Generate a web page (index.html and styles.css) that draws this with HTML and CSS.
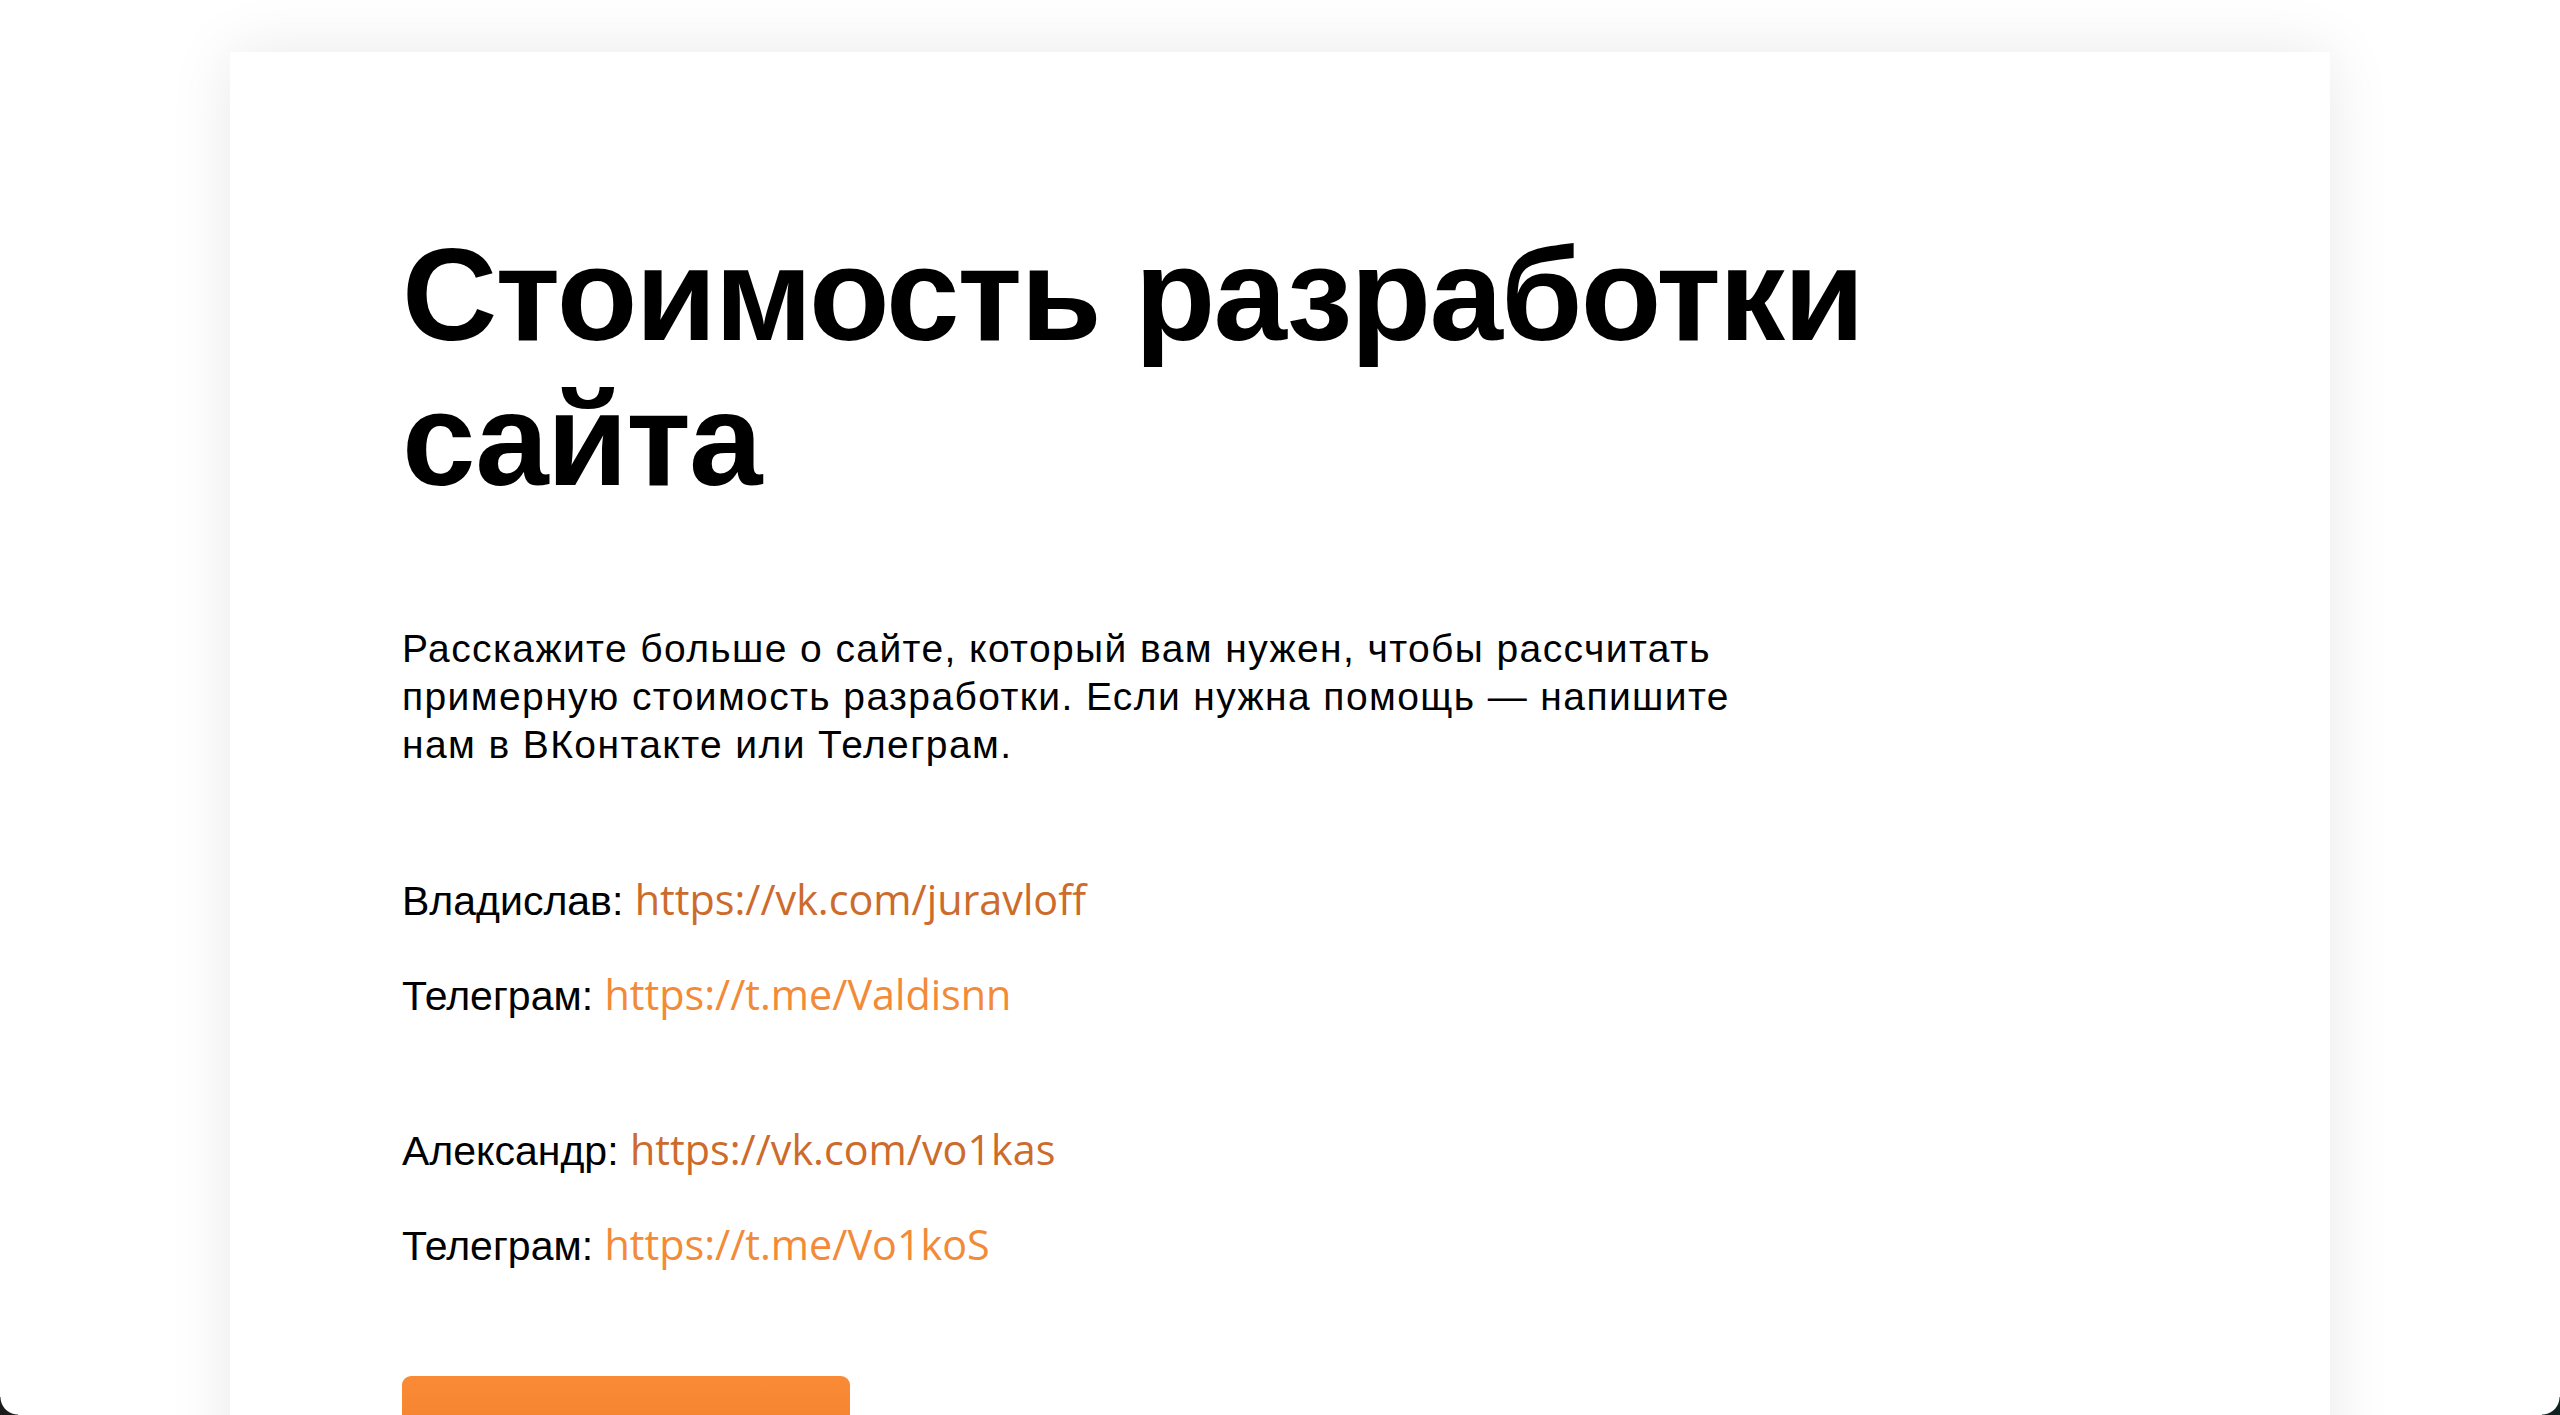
FILE: index.html
```html
<!DOCTYPE html>
<html lang="ru">
<head>
<meta charset="utf-8">
<title>Стоимость разработки сайта</title>
<link rel="stylesheet" href="styles.css">
</head>
<body>
<main class="card">
  <h1 class="title">Стоимость разработки<br>сайта</h1>
  <p class="lead">Расскажите больше о сайте, который вам нужен, чтобы рассчитать<br>примерную стоимость разработки. Если нужна помощь — напишите<br>нам в ВКонтакте или Телеграм.</p>
  <div class="contacts">
    <p class="row">Владислав: <a class="link link-vk" href="#">https://vk.com/juravloff</a></p>
    <p class="row">Телеграм: <a class="link link-tg" href="#">https://t.me/Valdisnn</a></p>
  </div>
  <div class="contacts">
    <p class="row">Александр: <a class="link link-vk" href="#">https://vk.com/vo1kas</a></p>
    <p class="row">Телеграм: <a class="link link-tg" href="#">https://t.me/Vo1koS</a></p>
  </div>
  <div class="button"></div>
</main>
<div class="corner corner-left"></div>
<div class="corner corner-right"></div>
</body>
</html>
```
FILE: styles.css
```css
html, body {
  margin: 0;
  padding: 0;
  background: #ffffff;
}
body {
  padding-top: 52px;
  height: 1415px;
  box-sizing: border-box;
  overflow: hidden;
  font-family: "Liberation Sans", Arial, sans-serif;
  color: #000;
}
.card {
  width: 2100px;
  margin: 0 auto;
  box-sizing: border-box;
  padding: 170px 172px 200px;
  background: #fff;
  box-shadow: 0 0 60px rgba(0, 0, 0, 0.09);
}
.title {
  margin: 0;
  font-size: 132px;
  line-height: 145px;
  font-weight: 700;
  letter-spacing: -1.8px;
}
.lead {
  margin: 113px 0 0;
  font-size: 39px;
  line-height: 48px;
  letter-spacing: 1.4px;
}
.contacts {
  margin-top: 105px;
  display: flex;
  flex-direction: column;
  gap: 40px;
}
.contacts + .contacts {
  margin-top: 100px;
}
.row {
  margin: 0;
  font-size: 41px;
  line-height: 55px;
}
.link {
  font-family: "Open Sans", Lato, sans-serif;
  font-size: 41.3px;
  line-height: 40px;
  text-decoration: none;
}
.link-vk { color: #cc6b2c; }
.link-tg { color: #f28a38; }
.button {
  margin-top: 102px;
  width: 448px;
  height: 90px;
  border-radius: 9px;
  background: linear-gradient(#fa8b36, #f27e2a);
}
.corner {
  position: fixed;
  bottom: 0;
  width: 18px;
  height: 18px;
}
.corner-left {
  left: 0;
  background: radial-gradient(circle at 100% 0, transparent 17px, #1b1b1b 18px);
}
.corner-right {
  right: 0;
  background: radial-gradient(circle at 0 0, transparent 17px, #0f2222 18px);
}
```
